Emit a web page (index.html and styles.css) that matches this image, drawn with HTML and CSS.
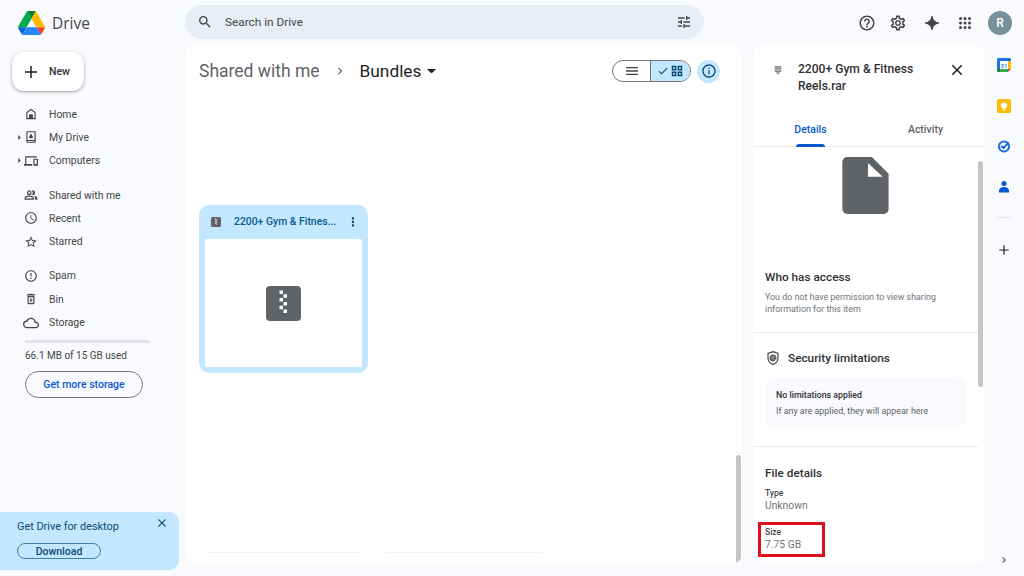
FILE: index.html
```html
<!DOCTYPE html>
<html lang="en">
<head>
<meta charset="utf-8">
<title>Drive</title>
<link rel="stylesheet" href="styles.css">
</head>
<body>
<div class="app">
  <header class="topbar">
    <div class="brand">
      <svg class="logo" viewBox="0 0 87.3 78"><path d="m6.6 66.85 3.85 6.65c.8 1.4 1.95 2.5 3.3 3.3l13.75-23.8h-27.5c0 1.55.4 3.1 1.2 4.5z" fill="#0066da"/><path d="m43.65 25-13.75-23.8c-1.35.8-2.5 1.9-3.3 3.3l-25.4 44a9.06 9.06 0 0 0 -1.2 4.5h27.5z" fill="#00ac47"/><path d="m73.55 76.8c1.35-.8 2.5-1.9 3.3-3.3l1.6-2.75 7.65-13.25c.8-1.4 1.2-2.95 1.2-4.5h-27.502l5.852 11.5z" fill="#ea4335"/><path d="m43.65 25 13.75-23.8c-1.35-.8-2.9-1.2-4.5-1.2h-18.5c-1.6 0-3.15.45-4.5 1.2z" fill="#00832d"/><path d="m59.8 53h-32.3l-13.75 23.8c1.35.8 2.9 1.2 4.5 1.2h50.8c1.6 0 3.15-.45 4.5-1.2z" fill="#2684fc"/><path d="m73.4 26.5-12.7-22c-.8-1.4-1.95-2.5-3.3-3.3l-13.75 23.8 16.15 28h27.45c0-1.55-.4-3.1-1.2-4.5z" fill="#ffba00"/></svg>
      <span class="brand-name">Drive</span>
    </div>
    <div class="search">
      <svg class="i16 dark" viewBox="0 0 24 24"><path d="M15.5 14h-.79l-.28-.27A6.47 6.47 0 0 0 16 9.5 6.5 6.5 0 1 0 9.5 16c1.61 0 3.09-.59 4.23-1.57l.27.28v.79l5 4.99L20.49 19l-4.99-5zm-6 0C7.01 14 5 11.99 5 9.5S7.01 5 9.5 5 14 7.01 14 9.5 11.99 14 9.5 14z"/></svg>
      <span class="search-text">Search in Drive</span>
      <svg class="i16 dark" viewBox="0 0 24 24"><path d="M3 17v2h6v-2H3zM3 5v2h10V5H3zm10 16v-2h8v-2h-8v-2h-2v6h2zM7 9v2H3v2h4v2h2V9H7zm14 4v-2H11v2h10zm-6-4h2V7h4V5h-4V3h-2v6z"/></svg>
    </div>
    <div class="top-actions">
      <svg class="i18 dark" viewBox="0 0 24 24"><path d="M11 18h2v-2h-2v2zm1-16C6.48 2 2 6.48 2 12s4.48 10 10 10 10-4.48 10-10S17.52 2 12 2zm0 18c-4.41 0-8-3.59-8-8s3.59-8 8-8 8 3.59 8 8-3.59 8-8 8zm0-14c-2.21 0-4 1.79-4 4h2c0-1.1.9-2 2-2s2 .9 2 2c0 2-3 1.75-3 5h2c0-2.25 3-2.5 3-5 0-2.21-1.79-4-4-4z"/></svg>
      <svg class="i18 dark" viewBox="0 0 24 24"><path d="M19.43 12.98c.04-.32.07-.64.07-.98 0-.34-.03-.66-.07-.98l2.11-1.65c.19-.15.24-.42.12-.64l-2-3.46c-.09-.16-.26-.25-.44-.25-.06 0-.12.01-.17.03l-2.49 1c-.52-.4-1.08-.73-1.69-.98l-.38-2.65C14.46 2.18 14.25 2 14 2h-4c-.25 0-.46.18-.49.42l-.38 2.65c-.61.25-1.17.59-1.69.98l-2.49-1c-.06-.02-.12-.03-.18-.03-.17 0-.34.09-.43.25l-2 3.46c-.13.22-.07.49.12.64l2.11 1.65c-.04.32-.07.65-.07.98 0 .33.03.66.07.98l-2.11 1.65c-.19.15-.24.42-.12.64l2 3.46c.09.16.26.25.44.25.06 0 .12-.01.17-.03l2.49-1c.52.4 1.08.73 1.69.98l.38 2.65c.03.24.24.42.49.42h4c.25 0 .46-.18.49-.42l.38-2.65c.61-.25 1.17-.59 1.69-.98l2.49 1c.06.02.12.03.18.03.17 0 .34-.09.43-.25l2-3.46c.12-.22.07-.49-.12-.64l-2.11-1.65zm-1.98-1.71c.04.31.05.52.05.73 0 .21-.02.43-.05.73l-.14 1.13.89.7 1.08.84-.7 1.21-1.27-.51-1.04-.42-.9.68c-.43.32-.84.56-1.25.73l-1.06.43-.16 1.13-.2 1.35h-1.4l-.19-1.35-.16-1.13-1.06-.43c-.43-.18-.83-.41-1.23-.71l-.91-.7-1.06.43-1.27.51-.7-1.21 1.08-.84.89-.7-.14-1.13c-.03-.31-.05-.54-.05-.74s.02-.43.05-.73l.14-1.13-.89-.7-1.08-.84.7-1.21 1.27.51 1.04.42.9-.68c.43-.32.84-.56 1.25-.73l1.06-.43.16-1.13.2-1.35h1.39l.19 1.35.16 1.13 1.06.43c.43.18.83.41 1.23.71l.91.7 1.06-.43 1.27-.51.7 1.21-1.07.85-.89.7.14 1.13zM12 8c-2.21 0-4 1.79-4 4s1.79 4 4 4 4-1.79 4-4-1.79-4-4-4zm0 6c-1.1 0-2-.9-2-2s.9-2 2-2 2 .9 2 2-.9 2-2 2z"/></svg>
      <svg class="i18 dark" viewBox="0 0 24 24"><path d="M12 3C12.7 8 16 11.3 21 12 16 12.7 12.7 16 12 21 11.300 16 8 12.700 3 12 8 11.300 11.300 8 12 3z" stroke="#444746" stroke-width="1.500" stroke-linejoin="round"/></svg>
      <svg class="i18 dark" viewBox="0 0 24 24"><circle cx="6" cy="6" r="2"/><circle cx="12" cy="6" r="2"/><circle cx="18" cy="6" r="2"/><circle cx="6" cy="12" r="2"/><circle cx="12" cy="12" r="2"/><circle cx="18" cy="12" r="2"/><circle cx="6" cy="18" r="2"/><circle cx="12" cy="18" r="2"/><circle cx="18" cy="18" r="2"/></svg>
      <span class="avatar">R</span>
    </div>
  </header>

  <div class="body-row">
    <aside class="sidebar">
      <button class="new-btn">
        <svg class="i18 dark-plus" viewBox="0 0 24 24"><path d="M20 13h-7v7h-2v-7H4v-2h7V4h2v7h7v2z"/></svg>
        <span>New</span>
      </button>
      <nav class="nav">
        <div class="nav-group">
          <a class="nav-item"><span class="caret-slot"></span><svg class="i14 dark" viewBox="0 0 24 24"><path d="M12 3L4 9v12h16V9l-8-6zm6 16h-3v-6H9v6H6v-9l6-4.500 6 4.500v9z"/><path d="M9 13h6v6H9z"/></svg><span>Home</span></a>
          <a class="nav-item"><span class="caret-slot"><svg class="tiny" viewBox="0 0 6 8"><path d="M1.500 1l3 3-3 3z"/></svg></span><svg class="i14 dark" viewBox="0 0 24 24"><path d="M5 2h15v20H5a1.500 1.500 0 0 1-1-1V3a1.500 1.500 0 0 1 1-1zm1 2v13h12V4H6zm0 15v1h12v-1H6z"/><path d="M12 6l3.500 6 -1 2h-5l-1-2z"/></svg><span>My Drive</span></a>
          <a class="nav-item"><span class="caret-slot"><svg class="tiny" viewBox="0 0 6 8"><path d="M1.500 1l3 3-3 3z"/></svg></span><svg class="i14 dark" viewBox="0 0 24 24"><path d="M4 6h18V4H4c-1.100 0-2 .9-2 2v11H0v3h14v-3H4V6zm19 2h-6c-.55 0-1 .45-1 1v10c0 .55.45 1 1 1h6c.55 0 1-.45 1-1V9c0-.55-.45-1-1-1zm-1 9h-4v-7h4v7z"/></svg><span>Computers</span></a>
        </div>
        <div class="nav-group">
          <a class="nav-item"><span class="caret-slot"></span><svg class="i14 dark" viewBox="0 0 24 24"><path d="M16.670 13.130C18.040 14.060 19 15.320 19 17v3h4v-3c0-2.180-3.570-3.470-6.330-3.870z"/><path d="M15 12c2.210 0 4-1.790 4-4s-1.790-4-4-4c-.47 0-.91.1-1.330.24C14.500 5.270 15 6.580 15 8s-.5 2.730-1.330 3.760c.42.14.86.24 1.330.24z"/><path d="M9 12c2.210 0 4-1.790 4-4s-1.790-4-4-4-4 1.790-4 4 1.790 4 4 4zm0-6c1.100 0 2 .9 2 2s-.9 2-2 2-2-.9-2-2 .9-2 2-2z"/><path d="M9 13c-2.670 0-8 1.340-8 4v3h16v-3c0-2.660-5.330-4-8-4zm6 5H3v-.99C3.200 16.290 6.300 15 9 15s5.800 1.290 6 2v1z"/></svg><span>Shared with me</span></a>
          <a class="nav-item"><span class="caret-slot"></span><svg class="i14 dark" viewBox="0 0 24 24"><path d="M11.990 2C6.470 2 2 6.480 2 12s4.470 10 9.990 10C17.520 22 22 17.520 22 12S17.520 2 11.990 2zM12 20c-4.420 0-8-3.580-8-8s3.580-8 8-8 8 3.580 8 8-3.580 8-8 8zm.5-13H11v6l5.250 3.150.75-1.230-4.500-2.670z"/></svg><span>Recent</span></a>
          <a class="nav-item"><span class="caret-slot"></span><svg class="i14 dark" viewBox="0 0 24 24"><path d="M22 9.240l-7.190-.62L12 2 9.190 8.630 2 9.240l5.460 4.730L5.820 21 12 17.270 18.180 21l-1.630-7.030L22 9.240zM12 15.400l-3.760 2.270 1-4.280-3.320-2.880 4.380-.38L12 6.100l1.710 4.040 4.380.38-3.320 2.880 1 4.280L12 15.400z"/></svg><span>Starred</span></a>
        </div>
        <div class="nav-group">
          <a class="nav-item"><span class="caret-slot"></span><svg class="i14 dark" viewBox="0 0 24 24"><path d="M11 15h2v2h-2zm0-8h2v6h-2zm.99-5C6.470 2 2 6.480 2 12s4.470 10 9.990 10C17.520 22 22 17.520 22 12S17.520 2 11.990 2zM12 20c-4.420 0-8-3.580-8-8s3.580-8 8-8 8 3.580 8 8-3.580 8-8 8z"/></svg><span>Spam</span></a>
          <a class="nav-item"><span class="caret-slot"></span><svg class="i14 dark" viewBox="0 0 24 24"><path d="M6 19c0 1.100.9 2 2 2h8c1.100 0 2-.9 2-2V7H6v12zM8 9h8v10H8V9zm7.500-5l-1-1h-5l-1 1H5v2h14V4h-3.500z"/><path d="M10 11h1.500v6H10zM12.500 11H14v6h-1.500z"/></svg><span>Bin</span></a>
          <a class="nav-item"><span class="caret-slot"></span><svg class="i16 dark cloud" viewBox="0 0 24 24"><path d="M19.350 10.040C18.670 6.590 15.640 4 12 4 9.110 4 6.600 5.640 5.350 8.040 2.340 8.360 0 10.910 0 14c0 3.310 2.690 6 6 6h13c2.760 0 5-2.240 5-5 0-2.640-2.050-4.780-4.650-4.960zM19 18H6c-2.210 0-4-1.790-4-4s1.790-4 4-4h.71C7.370 7.690 9.480 6 12 6c3.040 0 5.500 2.460 5.500 5.500v.5H19c1.660 0 3 1.340 3 3s-1.340 3-3 3z"/></svg><span>Storage</span></a>
        </div>
      </nav>
      <div class="storage">
        <div class="storage-bar"></div>
        <div class="storage-text">66.1 MB of 15 GB used</div>
        <button class="storage-btn">Get more storage</button>
      </div>
      <div class="promo">
        <div class="promo-head">
          <span>Get Drive for desktop</span>
          <svg class="i14 promo-x" viewBox="0 0 24 24"><path d="M19 6.410L17.590 5 12 10.590 6.410 5 5 6.410 10.590 12 5 17.590 6.410 19 12 13.410 17.590 19 19 17.590 13.410 12z"/></svg>
        </div>
        <button class="promo-btn">Download</button>
      </div>
    </aside>

    <main class="main">
      <div class="toolbar">
        <div class="crumbs">
          <span class="crumb-parent">Shared with me</span>
          <svg class="i14 muted" viewBox="0 0 24 24"><path d="M8.590 16.590L13.170 12 8.590 7.410 10 6l6 6-6 6z"/></svg>
          <span class="crumb-current">Bundles</span>
          <svg class="drop" viewBox="0 0 10 5"><path d="M0 0l5 5 5-5z"/></svg>
        </div>
        <div class="view-tools">
          <div class="toggle">
            <span class="toggle-left"><svg class="i16 dark" viewBox="0 0 24 24"><path d="M3 18h18v-2H3v2zm0-5h18v-2H3v2zm0-7v2h18V6H3z"/></svg></span>
            <span class="toggle-right">
              <svg class="i12 navy" viewBox="0 0 24 24"><path d="M9 16.170L4.830 12l-1.420 1.410L9 19 21 7l-1.410-1.410z"/></svg>
              <svg class="i14 navy" viewBox="0 0 24 24"><path d="M3 3h8v8H3zm2.500 2.500v3h3v-3zM13 3h8v8h-8zm2.500 2.500v3h3v-3zM3 13h8v8H3zm2.500 2.500v3h3v-3zM13 13h8v8h-8zm2.500 2.500v3h3v-3z" fill-rule="evenodd"/></svg>
            </span>
          </div>
          <span class="info-btn"><svg class="i16 navy" viewBox="0 0 24 24"><path d="M11 7h2v2h-2zm0 4h2v6h-2zm1-9C6.480 2 2 6.480 2 12s4.480 10 10 10 10-4.480 10-10S17.520 2 12 2zm0 18c-4.410 0-8-3.590-8-8s3.590-8 8-8 8 3.590 8 8-3.590 8-8 8z"/></svg></span>
        </div>
      </div>
      <div class="file-area">
        <article class="file-card">
          <div class="file-head">
            <svg class="zip-small" viewBox="0 0 12 12"><rect x="1" y="1" width="10" height="10" rx="1.500" fill="#5f6368"/><path d="M5 2.500h1v1H5zM6 3.500h1v1H6zM5 4.500h1v1H5zM6 5.500h1v1H6zM5 6.500h1v1H5zM6 7.500h1v1H6z" fill="#fff"/></svg>
            <span class="file-name">2200+ Gym &amp; Fitnes...</span>
            <svg class="i14 navy-dark" viewBox="0 0 24 24"><path d="M12 8c1.100 0 2-.9 2-2s-.9-2-2-2-2 .9-2 2 .9 2 2 2zm0 2c-1.100 0-2 .9-2 2s.9 2 2 2 2-.9 2-2-.9-2-2-2zm0 6c-1.100 0-2 .9-2 2s.9 2 2 2 2-.9 2-2-.9-2-2-2z"/></svg>
          </div>
          <div class="file-thumb">
            <svg class="zip-big" viewBox="0 0 35 35"><rect width="35" height="35" rx="4" fill="#5f6368"/><path d="M13.500 4.500h3.500V8h-3.500zM17.500 8.300H21v3.500h-3.500zM13.500 12.100h3.500v3.500h-3.500zM17.500 15.900H21v3.500h-3.500zM13.500 19.700h3.500v3.500h-3.500zM17.500 23.500H21V27h-3.500z" fill="#fff"/></svg>
          </div>
        </article>
      </div>
      <div class="ghost-row"><span class="ghost"></span><span class="ghost"></span></div>
      <span class="scroll-main"></span>
    </main>

    <section class="details">
      <div class="det-head">
        <svg class="zip-title" viewBox="0 0 12 12"><path d="M2 1.500h8v1.500H2zM2 4h8v1.500H2zM2 6.500h8v1.500H2zM3.500 9h5L6 11z" fill="#5f6368"/></svg>
        <div class="det-title">2200+ Gym &amp; Fitness Reels.rar</div>
        <svg class="i18 close" viewBox="0 0 24 24"><path d="M19 6.410L17.590 5 12 10.590 6.410 5 5 6.410 10.590 12 5 17.590 6.410 19 12 13.410 17.590 19 19 17.590 13.410 12z"/></svg>
      </div>
      <div class="tabs">
        <span class="tab active">Details</span>
        <span class="tab">Activity</span>
      </div>
      <div class="doc-wrap">
        <svg class="doc" viewBox="0 0 47 58"><path d="M5 0h25l17 17v36a5 5 0 0 1-5 5H5a5 5 0 0 1-5-5V5a5 5 0 0 1 5-5z" fill="#5f6368"/><path d="M26 6v14h15z" fill="#fff"/></svg>
      </div>
      <div class="sec access">
        <h3 class="sec-title">Who has access</h3>
        <p class="sec-note">You do not have permission to view sharing information for this item</p>
      </div>
      <div class="sec security">
        <div class="sec-row">
          <svg class="i16 shield" viewBox="0 0 24 24"><path d="M12 2.500l7.500 2.800v6.200c0 4.800-3.100 8.800-7.500 10-4.400-1.200-7.500-5.200-7.500-10V5.300z"/><path d="M14.700 15.300a4.300 4.300 0 1 1 1.600-3.300v.7a1.200 1.200 0 0 1-2.400 0V12a1.900 1.900 0 1 0-.6 1.400"/></svg>
          <h3 class="sec-title">Security limitations</h3>
        </div>
        <div class="limit-box">
          <div class="limit-head">No limitations applied</div>
          <div class="limit-note">If any are applied, they will appear here</div>
        </div>
      </div>
      <div class="sec file-details">
        <h3 class="sec-title">File details</h3>
        <div class="prop prop-first"><div class="prop-label">Type</div><div class="prop-value">Unknown</div></div>
        <div class="prop"><div class="prop-label">Size</div><div class="prop-value">7.75 GB</div></div>
      </div>
      <span class="scroll-det"></span>
      <span class="highlight"></span>
    </section>

    <aside class="rail">
      <svg class="rail-icon" viewBox="0 0 16 16"><rect x="1" y="1" width="14" height="14" rx="1.500" fill="#fff"/><path d="M1 4V2.500A1.500 1.500 0 0 1 2.500 1H12v3z" fill="#1a73e8"/><path d="M1 4h3v8H1z" fill="#1a73e8"/><path d="M1 12h3v3H2.500A1.500 1.500 0 0 1 1 13.500z" fill="#188038"/><path d="M4 12h8v3H4z" fill="#34a853"/><path d="M12 1h1.500A1.500 1.500 0 0 1 15 2.500V4h-3z" fill="#1967d2"/><path d="M12 4h3v8h-3z" fill="#fbbc04"/><path d="M12 12h3l-3 3z" fill="#ea4335"/><text class="cal-num" x="8" y="10.500">31</text></svg>
      <svg class="rail-icon" viewBox="0 0 16 16"><rect x="1" y="1" width="14" height="14" rx="1.500" fill="#fbbc04"/><path d="M6.500 10.500h3v1h-3zM7 12h2v.8H7z" fill="#fff"/><circle cx="8" cy="7.500" r="3" fill="#fff"/></svg>
      <svg class="rail-icon" viewBox="0 0 16 16"><circle cx="8" cy="8.500" r="5" fill="none" stroke="#1a73e8" stroke-width="2.200"/><path d="M5.500 8l2 2 5-5.500" fill="none" stroke="#0b57d0" stroke-width="1.800"/></svg>
      <svg class="rail-icon" viewBox="0 0 16 16"><circle cx="8" cy="4.500" r="2.500" fill="#0b57d0"/><path d="M3 13.500v-2c0-2 2.200-3.500 5-3.500s5 1.500 5 3.500v2z" fill="#0b57d0"/></svg>
      <span class="rail-sep"></span>
      <svg class="i14 rail-plus" viewBox="0 0 24 24"><path d="M20 13h-7v7h-2v-7H4v-2h7V4h2v7h7v2z"/></svg>
      <svg class="i12 rail-chevron" viewBox="0 0 24 24"><path d="M8.590 16.590L13.170 12 8.590 7.410 10 6l6 6-6 6z"/></svg>
    </aside>
  </div>
</div>
</body>
</html>
```
FILE: styles.css
```css
* { box-sizing: border-box; }
html, body { margin: 0; height: 100%; }
body {
  background: #f8fafd;
  color: #1f1f1f;
  font-family: "Roboto", "Liberation Sans", sans-serif;
  overflow: hidden;
}
button { font-family: inherit; cursor: pointer; }
h3, p { margin: 0; }
svg { display: block; flex: none; }

.i12 { width: 12px; height: 12px; }
.i14 { width: 14px; height: 14px; }
.i16 { width: 16px; height: 16px; }
.i18 { width: 18px; height: 18px; }
.dark { fill: #444746; }
.dark-plus { fill: #1f1f1f; }
.muted { fill: #5f6368; }
.navy { fill: #0b4a75; }
.navy-dark { fill: #1f3b4d; }

.app { width: 1024px; height: 576px; display: flex; flex-direction: column; }

/* top bar */
.topbar { height: 45px; display: flex; align-items: center; flex: none; }
.brand { width: 185px; padding: 0 0 0 18px; display: flex; align-items: center; gap: 7px; flex: none; }
.logo { width: 27px; height: 24px; }
.brand-name { font-size: 15.5px; color: #444746; font-family: "Open Sans", sans-serif; }
.search {
  width: 519px; height: 34px; margin-bottom: 1px;
  background: #e9eef6; border-radius: 17px;
  display: flex; align-items: center; padding: 0 12px;
}
.search-text { flex: 1; margin-left: 12px; font-size: 11.8px; color: #444746; }
.top-actions { flex: 1; display: flex; align-items: center; padding-left: 154px; }
.top-actions svg:nth-child(1) { margin-right: 13px; }
.top-actions svg:nth-child(2) { margin-right: 16px; }
.top-actions svg:nth-child(3) { margin-right: 15px; }
.top-actions svg:nth-child(4) { margin-right: 14px; }
.avatar {
  width: 24px; height: 24px; border-radius: 50%;
  background: #78909c; color: #fff; font-size: 12px; font-weight: 500;
  display: flex; align-items: center; justify-content: center;
}

.body-row { flex: 1; display: flex; min-height: 0; padding-bottom: 12px; }

/* sidebar */
.sidebar { width: 185px; flex: none; position: relative; padding-top: 7px; }
.new-btn {
  margin-left: 12px; width: 72px; height: 39px;
  border: 0; border-radius: 12px; background: #fff;
  box-shadow: 0 1px 2px rgba(60,64,67,.3), 0 1px 3px 1px rgba(60,64,67,.15);
  display: flex; align-items: center; gap: 9px; padding: 0 0 0 10px;
  font-size: 10.5px; font-weight: 500; color: #303134;
}
.nav { margin-top: 11.5px; }
.nav-group { margin-bottom: 11px; }
.nav-item {
  height: 23.3px; display: flex; align-items: center;
  font-size: 10.4px; color: #444746; padding-left: 17px;
}
.caret-slot { width: 7px; display: flex; align-items: center; }
.tiny { width: 5px; height: 7px; fill: #444746; }
.nav-item > svg { margin-right: 11px; }
.nav-item > svg.cloud { margin-left: -1px; margin-right: 10px; }
.storage { margin: 0 0 0 25px; }
.storage-bar { width: 125px; height: 3px; background: #e1e3e6; margin-top: -5.500px; }
.storage-text { font-size: 10px; color: #444746; margin-top: 6px; line-height: 14px; }
.storage-btn {
  display: block; margin-top: 8.500px; width: 118px; height: 26.500px;
  background: transparent; border: 1px solid #747775; border-radius: 14px;
  color: #0b57d0; font-size: 10.5px; font-weight: 500; padding: 0;
}
.promo {
  position: absolute; left: 0; bottom: -6px; width: 179px; height: 58px;
  background: #c2e7ff; border-radius: 0 10px 10px 0;
  padding: 8px 0 0 17px;
}
.promo-head { display: flex; justify-content: space-between; font-size: 10.9px; color: #0b4a75; line-height: 14px; padding-right: 10px; }
.promo-x { fill: #0b4a75; margin-top: -4px; }
.promo-btn {
  display: block; margin-top: 9px; width: 84px; height: 16px; padding: 0;
  background: transparent; border: 1px solid #3f7ea8; border-radius: 8px;
  color: #0b4a75; font-size: 10.5px; font-weight: 500; line-height: 13px;
}

/* main */
.main { width: 557px; flex: none; background: #fff; border-radius: 10px; position: relative; overflow: hidden; }
.toolbar { height: 52px; display: flex; align-items: center; justify-content: space-between; padding: 0 22px 0 14px; }
.crumbs { display: flex; align-items: center; }
.crumb-parent { font-size: 17.5px; color: #5f6368; }
.crumbs .i14 { margin: 0 13px; }
.crumb-current { font-size: 17.3px; color: #1f1f1f; }
.drop { width: 9px; height: 4.5px; fill: #1f1f1f; margin-left: 6px; }
.view-tools { display: flex; align-items: center; gap: 6px; }
.toggle { display: flex; width: 79px; height: 22px; border: 1px solid #747775; border-radius: 11px; overflow: hidden; }
.toggle-left { width: 38px; display: flex; align-items: center; justify-content: center; border-right: 1px solid #747775; }
.toggle-right { flex: 1; background: #c2e7ff; display: flex; align-items: center; justify-content: center; gap: 1px; }
.info-btn { width: 23px; height: 23px; border-radius: 50%; background: #c2e7ff; display: flex; align-items: center; justify-content: center; }
.file-area { padding: 108px 0 0 14px; }
.file-card { width: 169px; height: 168px; background: #c2e7ff; border-radius: 10px; padding: 0 6px 6px; display: flex; flex-direction: column; }
.file-head { height: 34px; padding-bottom: 1px; display: flex; align-items: center; flex: none; }
.zip-small { width: 12px; height: 12px; margin-left: 5px; }
.file-name { flex: 1; margin-left: 12px; font-size: 10.4px; font-weight: 500; color: #0b5a8c; white-space: nowrap; }
.file-head .navy-dark { margin-right: 2px; }
.file-thumb { flex: 1; background: #fff; border-radius: 2px; display: flex; align-items: center; justify-content: center; }
.zip-big { width: 35px; height: 35px; }
.ghost-row { display: flex; gap: 22px; padding: 179px 0 0 21px; }
.ghost { width: 157px; height: 1px; background: #f1f3f6; }
.scroll-main { position: absolute; left: 551px; top: 410px; width: 5px; height: 109px; background: #c4c7c5; border-radius: 3px; }

/* details */
.details { width: 231px; flex: none; margin-left: 11px; background: #fff; border-radius: 10px; position: relative; overflow: hidden; }
.det-head { display: flex; padding: 16px 15px 0 20px; height: 67px; }
.zip-title { width: 10px; height: 10px; margin-top: 4px; }
.det-title { width: 125px; margin-left: 15px; font-size: 12.1px; line-height: 17px; font-weight: 500; color: #303134; }
.close { fill: #1f1f1f; margin-left: 25px; }
.tabs { display: flex; height: 35px; border-bottom: 1px solid #e8eaed; padding-right: 1px; }
.tab { flex: 1; text-align: center; font-size: 10.5px; line-height: 35px; color: #5f6368; font-weight: 500; position: relative; }
.tab.active { color: #0b57d0; }
.tab.active::after { content: ""; position: absolute; left: 43px; bottom: -1px; width: 29px; height: 3px; background: #0b57d0; border-radius: 3px 3px 0 0; }
.doc-wrap { padding: 10px 0 0 89px; height: 119px; }
.doc { width: 47px; height: 57px; }
.sec { margin-right: 6px; border-bottom: 1px solid #e8eaed; padding-left: 12px; }
.sec-title { font-size: 11.8px; line-height: 16px; font-weight: 500; color: #303134; }
.sec-note { font-size: 8.9px; line-height: 12px; color: #70757a; margin-top: 6px; width: 190px; }
.access { height: 67px; padding-top: 3px; }
.security { height: 114px; padding-top: 17px; }
.sec-row { display: flex; align-items: center; gap: 7px; }
.shield { fill: none; stroke: #444746; stroke-width: 1.800; }
.limit-box { margin-top: 12px; width: 201px; height: 50px; background: #f8fafd; border-radius: 10px; padding: 11px 0 0 11px; }
.limit-head { font-size: 8.8px; font-weight: 500; line-height: 12px; color: #303134; }
.limit-note { font-size: 8.9px; line-height: 12px; color: #5f6368; margin-top: 4px; }
.file-details { border-bottom: 0; padding-top: 18px; }
.prop { margin-top: 14px; }
.prop-first { margin-top: 6px; }
.prop-label { font-size: 8.5px; font-weight: 500; line-height: 12px; color: #444746; }
.prop-value { font-size: 10.3px; line-height: 13px; color: #70757a; }
.scroll-det { position: absolute; left: 225px; top: 116px; width: 5px; height: 226px; background: #c4c7c5; border-radius: 3px; }
.highlight { position: absolute; left: 5px; top: 477px; width: 67px; height: 35px; border: 3px solid #e0101f; }

/* right rail */
.rail { flex: 1; display: flex; flex-direction: column; align-items: center; padding-top: 12px; position: relative; }
.rail-icon { width: 16px; height: 16px; margin-bottom: 24.500px; }
.cal-num { font: 500 6px "Roboto", sans-serif; fill: #1a73e8; text-anchor: middle; }
.rail-sep { width: 14px; height: 1px; background: #e3e6ea; margin-top: -2px; }
.rail-plus { fill: #1f1f1f; margin-top: 25px; }
.rail-chevron { fill: #444746; position: absolute; left: 14px; bottom: -2px; }
```
